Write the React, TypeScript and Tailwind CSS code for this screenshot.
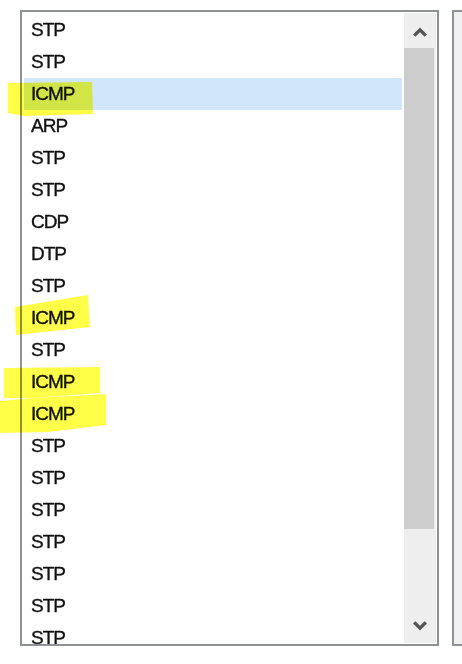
const rows = [
  'STP', 'STP', 'ICMP', 'ARP', 'STP', 'STP', 'CDP', 'DTP', 'STP', 'ICMP',
  'STP', 'ICMP', 'ICMP', 'STP', 'STP', 'STP', 'STP', 'STP', 'STP', 'STP',
];

const selectedRow = 2;

// highlighter marks drawn over the list, in page coordinates
const marks = [
  '8,83 92,82 93,114 24,116 8,113',
  '15,307 88,295 90,327 16,335',
  '4,368 100,367 100,393 34,398 4,398',
  '0,401 34,398 106,394 106,425 48,432 0,433',
];

function Chevron({ up }: { up: boolean }) {
  return (
    <svg width="14" height="10" viewBox="0 0 14 10">
      <polygon
        points="0,7.5 7,0.5 14,7.5 11.6,9.8 7,5.3 2.4,9.8"
        fill="#555555"
        transform={up ? undefined : 'rotate(180 7 5)'}
      />
    </svg>
  );
}

export default function App() {
  return (
    <div className="relative w-[462px] h-[664px] bg-white overflow-hidden flex gap-[13px] pt-[10px] pl-[20px]">
      {/* List box */}
      <div className="w-[419px] h-[636px] shrink-0 border-2 border-[#8e9297] flex bg-white">
        <div className="flex-1 overflow-hidden px-[2px] pt-[2px]">
          {rows.map((r, i) => (
            <div
              key={i}
              className={`h-[32px] flex items-center pl-[7px] text-[19px] tracking-[-1px] text-[#111] [-webkit-text-stroke:0.35px_#111] ${
                i === selectedRow ? 'bg-[#d1e5fb]' : ''
              }`}
              style={{ fontFamily: '"Liberation Sans", Arial, sans-serif' }}
            >
              {r}
            </div>
          ))}
        </div>

        {/* Scrollbar */}
        <div className="w-[32px] mr-px mt-px mb-px bg-[#eeeeee] flex flex-col">
          <div className="h-[35px] pt-[3px] flex items-center justify-center">
            <Chevron up />
          </div>
          <div className="h-[481px] w-[30px] bg-[#cdcdcd]" />
          <div className="flex-1" />
          <div className="h-[35px] flex items-center justify-center">
            <Chevron up={false} />
          </div>
        </div>
      </div>

      {/* Next panel, cut off at the edge */}
      <div className="w-[30px] h-[636px] shrink-0 border-2 border-r-0 border-[#8e9297] bg-[#f0f0f0]" />

      {/* Highlighter */}
      <svg className="absolute inset-0 pointer-events-none mix-blend-multiply" width="462" height="664">
        {marks.map((p, i) => (
          <polygon key={i} points={p} fill="#ffff48" />
        ))}
      </svg>
    </div>
  );
}
